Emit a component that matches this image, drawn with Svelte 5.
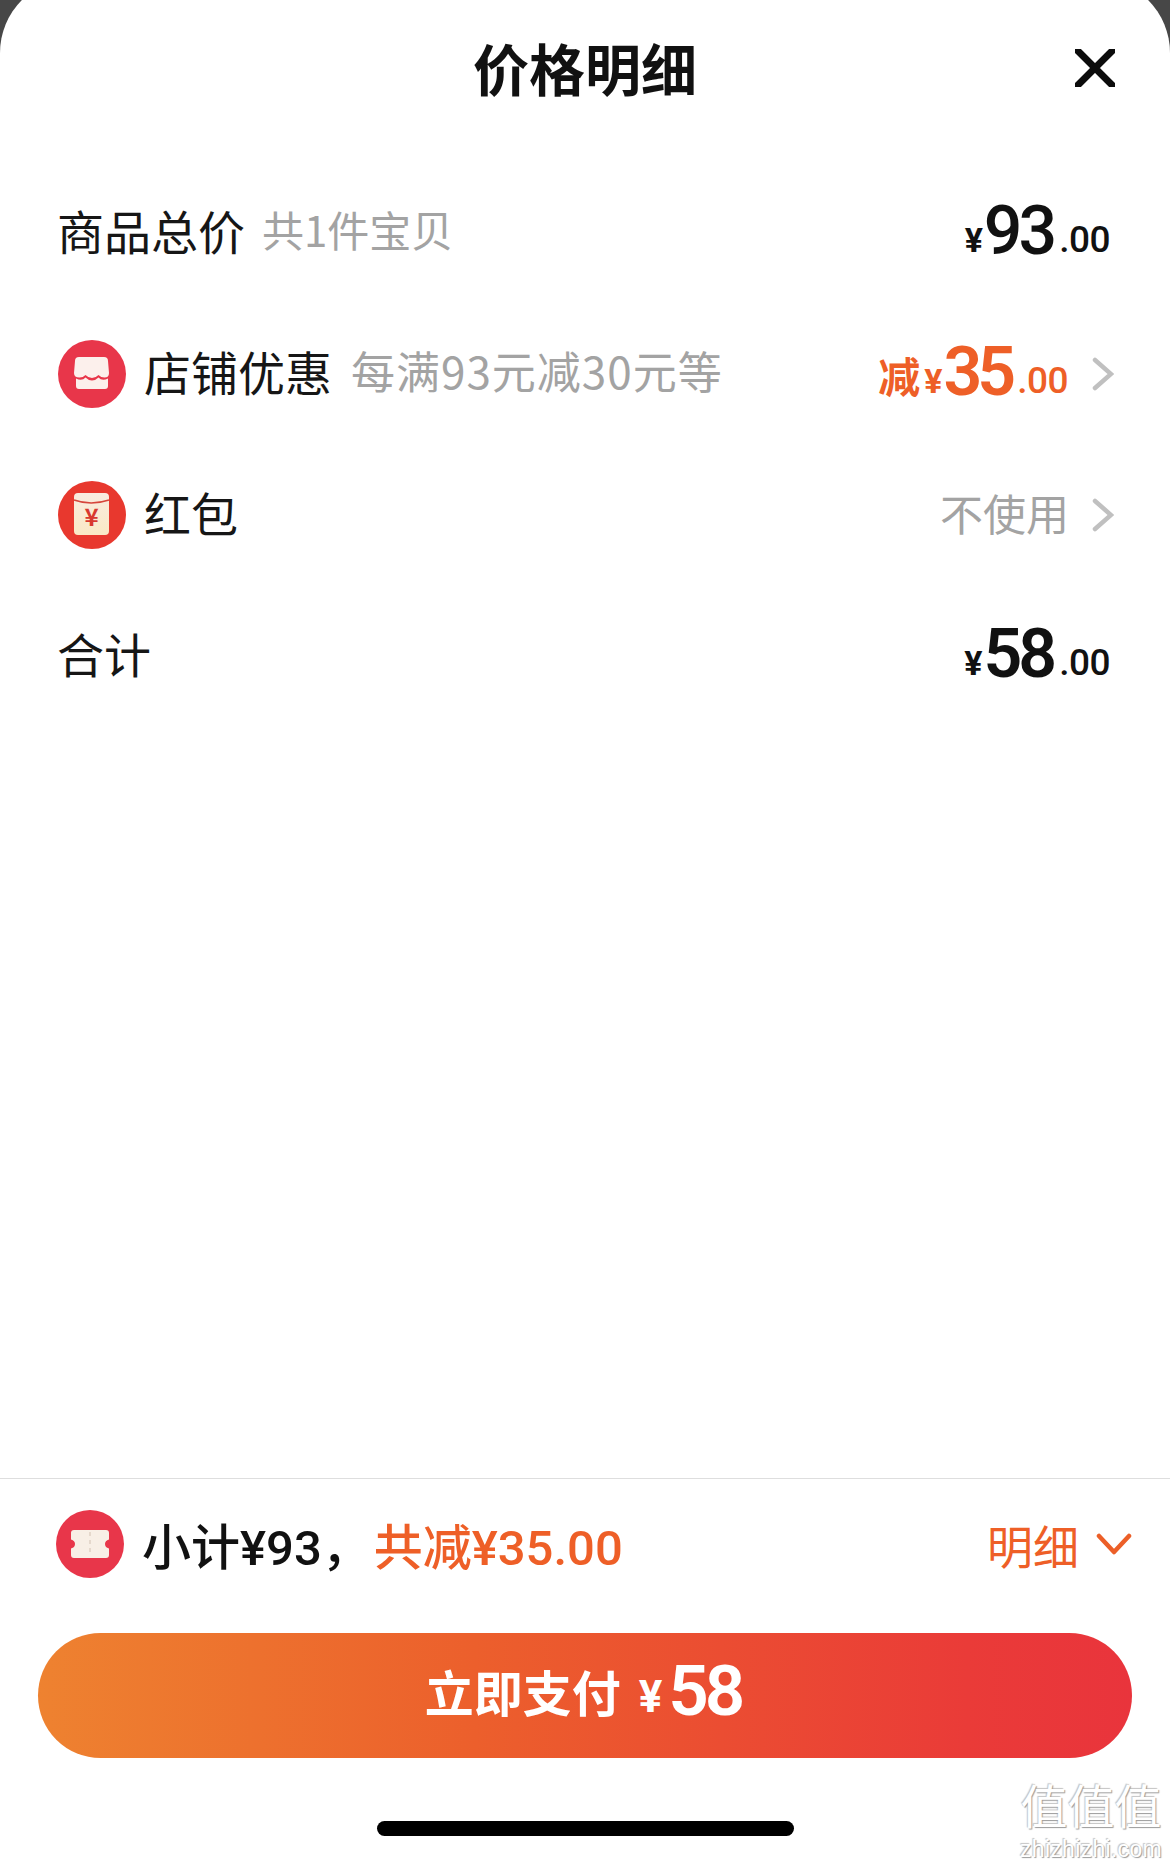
<script>
  const rows = [
    { id: 'shop', label: '店铺优惠', sub: '每满93元减30元等' },
    { id: 'packet', label: '红包' }
  ];
</script>

<div class="sheet">
  <header class="head">
    <h1>价格明细</h1>
    <svg class="close" viewBox="0 0 40 38" aria-label="关闭">
      <path d="M3 2 37 36M37 2 3 36" />
    </svg>
  </header>

  <section class="list">
    <div class="row">
      <div class="left"><span class="label first">商品总价</span><span class="sub gap-a">共1件宝贝</span></div>
      <div class="amount end"><span class="yen">¥</span><span class="int">93</span><span class="dec">.00</span></div>
    </div>

    {#each rows as r}
      <div class="row">
        <div class="left">
          {#if r.id === 'shop'}
            <svg class="badge" viewBox="0 0 68 68">
              <circle cx="34" cy="34" r="34" fill="#e8364a" />
              <path d="M21 17H46Q50 17 50 21L51 33Q51 37.500 46.500 37.500Q43 37.500 40.500 35Q37.500 38 34 38Q30.500 38 27.500 35Q25 37.500 21.500 37.500Q16 37.500 16 33L17 21Q17 17 21 17Z" fill="#fcf0ec" />
              <path d="M18 38.500Q24 41.500 27.500 37.500Q30.500 40.500 34 40.500Q37.500 40.500 40.500 37.500Q44 41.500 50 38.500V46Q50 49 47 49H21Q18 49 18 46Z" fill="#fcf0ec" />
            </svg>
          {:else}
            <svg class="badge" viewBox="0 0 68 68">
              <defs>
                <linearGradient id="env" x1="0" y1="0" x2="0" y2="1">
                  <stop offset="0" stop-color="#f9ebe0" />
                  <stop offset="1" stop-color="#fae9c5" />
                </linearGradient>
              </defs>
              <circle cx="34" cy="34" r="34" fill="#e8382e" />
              <rect x="16" y="12" width="35" height="42" rx="4" fill="url(#env)" />
              <path d="M16 19Q33 25 51 19" fill="none" stroke="#d6453b" stroke-width="1.500" />
              <text class="packet-yen" x="33.500" y="45" text-anchor="middle">¥</text>
            </svg>
          {/if}
          <span class="label gap-b">{r.label}</span>
          {#if r.sub}<span class="sub gap-c">{r.sub}</span>{/if}
        </div>
        <div class="right">
          {#if r.id === 'shop'}
            <div class="amount orange"><span class="jian">减</span><span class="yen">¥</span><span class="int tight">35</span><span class="dec">.00</span></div>
          {:else}
            <span class="none">不使用</span>
          {/if}
          <svg class="chev" viewBox="0 0 22 34"><path d="M3 3 19 17 3 31" /></svg>
        </div>
      </div>
    {/each}

    <div class="row">
      <div class="left"><span class="label first">合计</span></div>
      <div class="amount end"><span class="yen">¥</span><span class="int bold">58</span><span class="dec">.00</span></div>
    </div>
  </section>

  <footer class="foot">
    <div class="subtotal">
      <div class="left">
        <svg class="badge" viewBox="0 0 68 68">
          <circle cx="34" cy="34" r="34" fill="#e8364a" />
          <path d="M18 20H50Q53 20 53 23V29.500Q49 30.500 49 34Q49 37.500 53 38.500V45Q53 48 50 48H18Q15 48 15 45V38.500Q19 37.500 19 34Q19 30.500 15 29.500V23Q15 20 18 20Z" fill="#f8efe6" />
          <path d="M34 22V46" stroke="#e5d8cc" stroke-width="2" stroke-dasharray="4 4" />
        </svg>
        <span class="sum gap-b">小计¥93，</span>
        <span class="sum orange cut">共减¥35.00</span>
      </div>
      <div class="detail">
        <span>明细</span>
        <svg class="down" viewBox="0 0 36 24"><path d="M3 4 18 20 33 4" /></svg>
      </div>
    </div>
    <button class="pay"><span>立即支付</span><span class="pay-yen">¥</span><span class="pay-num">58</span></button>
    <div class="home"></div>
  </footer>

  <div class="mark" aria-hidden="true">
    <div class="mark-cn">值值值</div>
    <div class="mark-en">zhizhizhi.com</div>
  </div>
</div>

<style>
  :global(body) {
    margin: 0;
    background: #474747;
    overflow: hidden;
  }
  .sheet {
    --orange: #ee5f27;
    position: relative;
    box-sizing: border-box;
    width: 1170px;
    height: 1882px;
    margin-top: -22px;
    background: #fff;
    border-radius: 75px 75px 0 0;
    display: flex;
    flex-direction: column;
    color: #111;
    font-family: "Noto Sans CJK SC", "Noto Sans", sans-serif;
  }
  .head {
    position: relative;
    height: 184px;
    flex: none;
    box-sizing: border-box;
    padding-top: 22px;
    display: flex;
    justify-content: center;
  }
  h1 {
    margin: 0;
    font-size: 56px;
    font-weight: 700;
    line-height: 134px;
    height: 140px;
  }
  .close {
    position: absolute;
    left: 1075px;
    top: 71px;
    width: 40px;
    height: 38px;
  }
  .close path {
    fill: none;
    stroke: #0c0c0c;
    stroke-width: 7;
    stroke-linecap: round;
  }
  .list {
    flex: 1;
    display: flex;
    flex-direction: column;
  }
  .row {
    height: 141px;
    flex: none;
    box-sizing: border-box;
    padding: 0 57px 0 58px;
    display: flex;
    align-items: center;
    justify-content: space-between;
  }
  .left, .right {
    display: flex;
    align-items: center;
  }
  .label {
    font-size: 47px;
    line-height: 60px;
    color: #161616;
    margin-bottom: 5px;
  }
  .label.first { margin-left: -1px; }
  .sub {
    font-size: 44px;
    line-height: 60px;
    color: #a3a3a3;
    margin-bottom: 7px;
  }
  .gap-a { margin-left: 17px; margin-bottom: 7px; font-size: 42px; }
  .gap-b { margin-left: 18px; }
  .gap-c { margin-left: 19px; letter-spacing: 1px; }
  .badge {
    width: 68px;
    height: 68px;
    flex: none;
  }
  .packet-yen {
    font-size: 24px;
    font-weight: 700;
    fill: #d8382f;
    font-family: "Noto Sans CJK SC", sans-serif;
  }
  .amount {
    display: flex;
    align-items: baseline;
    font-family: Roboto, "Noto Sans CJK SC", sans-serif;
    font-weight: 500;
    line-height: 70px;
    color: #111;
    margin-top: 4px;
  }
  .amount.end {
    margin-right: 3px;
  }
  .amount.orange {
    margin-right: -1px;
    color: var(--orange);
  }
  .orange { color: var(--orange); }
  .yen {
    font-size: 34px;
    font-weight: 700;
    margin-right: 1px;
    margin-left: 2px;
  }
  .int {
    font-size: 68px;
    font-weight: 500;
    letter-spacing: -4px;
    margin-right: 6px;
    transform: translateY(2px);
  }
  .int.bold, .int.tight { font-weight: 600; }
  .int.tight { letter-spacing: -5px; }
  .dec {
    font-size: 37px;
    font-weight: 500;
    letter-spacing: -0.5px;
  }
  .jian {
    font-family: "Noto Sans CJK SC", sans-serif;
    font-size: 42px;
    font-weight: 700;
    margin-right: 2px;
  }
  .none {
    font-size: 43px;
    color: #a3a3a3;
    line-height: 60px;
    margin-bottom: 5px;
    margin-right: -2px;
  }
  .chev {
    width: 22px;
    height: 34px;
    margin-left: 25px;
    margin-right: -1px;
  }
  .chev path {
    fill: none;
    stroke: #c0c0c0;
    stroke-width: 4.500;
    stroke-linecap: round;
  }
  .foot {
    flex: none;
    border-top: 1px solid #dedede;
    display: flex;
    flex-direction: column;
    align-items: center;
    height: 382px;
    box-sizing: border-box;
  }
  .subtotal {
    width: 100%;
    box-sizing: border-box;
    height: 130px;
    margin-bottom: 24px;
    padding: 0 38px 0 56px;
    display: flex;
    align-items: center;
    justify-content: space-between;
  }
  .sum {
    font-family: Roboto, "Noto Sans CJK SC", sans-serif;
    font-size: 49px;
    font-weight: 500;
    line-height: 60px;
    margin-top: 10px;
  }
  .cut { margin-left: 3px; }
  .detail {
    display: flex;
    align-items: center;
    font-size: 46px;
    color: var(--orange);
    line-height: 60px;
  }
  .down {
    width: 36px;
    height: 24px;
    margin-left: 17px;
    margin-top: 0;
  }
  .down path {
    fill: none;
    stroke: #ec5f28;
    stroke-width: 4.500;
    stroke-linecap: round;
    stroke-linejoin: round;
  }
  .pay {
    width: 1094px;
    height: 125px;
    flex: none;
    border: 0;
    padding: 0 0 16px;
    box-sizing: border-box;
    border-radius: 63px;
    background: linear-gradient(90deg, #ee8230 0%, #ec5f2c 40%, #ea3b38 85%, #e9343c 100%);
    color: #fff;
    display: flex;
    align-items: baseline;
    justify-content: center;
    font-family: "Noto Sans CJK SC", sans-serif;
    font-size: 49px;
    font-weight: 700;
    line-height: 109px;
  }
  .pay-yen {
    font-family: Roboto, sans-serif;
    font-size: 44px;
    margin-left: 18px;
    margin-right: 6px;
  }
  .pay-num {
    font-family: Roboto, sans-serif;
    font-size: 71px;
    font-weight: 600;
    letter-spacing: -4px;
    margin-right: 4px;
    transform: translateY(3px);
  }
  .home {
    width: 417px;
    height: 15px;
    flex: none;
    margin-top: 63px;
    border-radius: 8px;
    background: #000;
  }
  .mark {
    position: absolute;
    left: 1012px;
    top: 1802px;
    width: 158px;
    text-align: center;
    pointer-events: none;
    color: #fff;
    text-shadow: 1px 1px 1px #9a9a9a, -1px -1px 1px #c4c4c4;
  }
  .mark-cn {
    font-family: "Liberation Sans", "Noto Sans CJK SC", sans-serif;
    font-size: 47px;
    line-height: 56px;
  }
  .mark-en {
    font-family: "Liberation Sans", sans-serif;
    font-size: 23px;
    line-height: 26px;
    letter-spacing: 0.3px;
  }
</style>
